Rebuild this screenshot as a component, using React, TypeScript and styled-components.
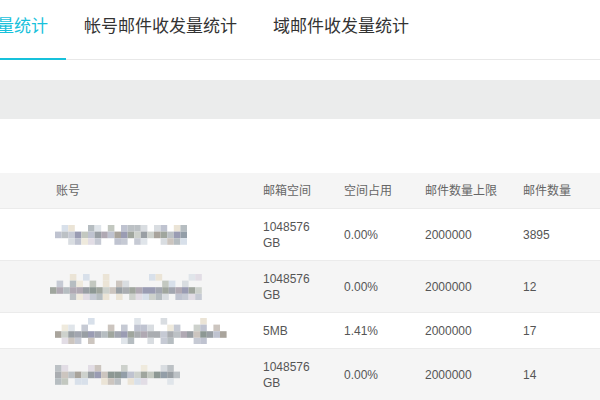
import React from 'react';
import styled, { createGlobalStyle } from 'styled-components';

const GlobalStyle = createGlobalStyle`
  html, body {
    margin: 0;
    padding: 0;
    background: #fff;
  }
  body {
    font-family: 'Liberation Sans', 'Noto Sans CJK SC', Arial, sans-serif;
    overflow: hidden;
  }
`;

const Page = styled.div`
  width: 600px;
  height: 400px;
  overflow: hidden;
`;

const TabBar = styled.div`
  height: 59px;
  border-bottom: 1px solid #e8e8e8;
`;

// the first tab is scrolled partly out of view on the left
const TabList = styled.div`
  display: flex;
  margin-left: -106px;
`;

const Tab = styled.div<{ $active?: boolean }>`
  box-sizing: border-box;
  height: 60px;
  padding: 0 18px;
  line-height: 54px;
  font-size: 17px;
  white-space: nowrap;
  color: ${p => (p.$active ? '#17c1db' : '#333')};
  border-bottom: 2px solid ${p => (p.$active ? '#17c1db' : 'transparent')};
  cursor: pointer;
`;

const FilterBar = styled.div`
  margin-top: 20px;
  height: 39px;
  background: #ebecec;
`;

const Table = styled.div`
  margin-top: 54px;
  font-size: 12px;
  color: #555;
`;

const Row = styled.div<{ $striped?: boolean; $head?: boolean }>`
  display: grid;
  grid-template-columns: 56px 207px 81px 81px 98px 77px;
  align-items: center;
  background: ${p => (p.$striped || p.$head ? '#f5f5f5' : '#fff')};
  border-bottom: 1px solid #ebebeb;
  color: ${p => (p.$head ? '#666' : '#555')};
`;

const Cell = styled.div<{ $narrow?: boolean }>`
  padding: 10px ${p => (p.$narrow ? '24px' : '8px')} 9px 0;
  line-height: 16px;
  min-height: 16px;
`;

const MosaicWrap = styled.div`
  height: 16px;
  display: flex;
  align-items: center;
`;

const palette = {
  dark: ['#999fa4', '#a2a6b0', '#8d9894', '#9a9cb3', '#aaadb1', '#a0a69e', '#b0a9b3', '#939ea8', '#a9a49c'],
  mid: ['#bcc1c5', '#c3c8c0', '#bfc3d0', '#ccc5bf', '#b6bdc1', '#c6cad4', '#cdd1cc'],
  light: ['#d9dde1', '#e0e5ea', '#ebe4d6', '#d8e0ea', '#e2dde5', '#efeadd'],
};

function rng(seed: number) {
  let s = seed;
  return () => {
    s = (s * 9301 + 49297) % 233280;
    return s / 233280;
  };
}

const Mosaic: React.FC<{ cols: number; seed: number; rows?: number; offset?: number }> = ({
  cols,
  seed,
  rows = 3,
  offset = 0,
}) => {
  const r = rng(seed);
  const size = 6.6;
  const mainRow = Math.floor(rows / 2);
  const rects: React.ReactNode[] = [];
  for (let c = 0; c < cols; c++) {
    for (let y = 0; y < rows; y++) {
      const dist = Math.abs(y - mainRow);
      const chance = dist === 0 ? 1 : dist === 1 ? 0.55 : 0.25;
      if (r() > chance) continue;
      let set = palette.light;
      if (dist === 0) set = r() > 0.3 ? palette.dark : palette.mid;
      else if (dist === 1) set = r() > 0.45 ? palette.mid : palette.light;
      const fill = set[Math.floor(r() * set.length)];
      rects.push(
        <rect key={`${c}-${y}`} x={c * size} y={y * size} width={size} height={size} fill={fill} />
      );
    }
  }
  return (
    <MosaicWrap>
      <svg width={cols * size} height={rows * size} style={{ marginLeft: offset, flexShrink: 0 }}>
        {rects}
      </svg>
    </MosaicWrap>
  );
};

interface Account {
  cols: number;
  seed: number;
  rows: number;
  offset: number;
  space: string;
  usage: string;
  limit: string;
  count: string;
}

const accounts: Account[] = [
  { cols: 20, seed: 17, rows: 3, offset: -1, space: '1048576 GB', usage: '0.00%', limit: '2000000', count: '3895' },
  { cols: 23, seed: 42, rows: 4, offset: -6, space: '1048576 GB', usage: '0.00%', limit: '2000000', count: '12' },
  { cols: 26, seed: 91, rows: 4, offset: -1, space: '5MB', usage: '1.41%', limit: '2000000', count: '17' },
  { cols: 19, seed: 7, rows: 3, offset: -1, space: '1048576 GB', usage: '0.00%', limit: '2000000', count: '14' },
];

const App: React.FC = () => {
  return (
    <Page>
      <GlobalStyle />
      <TabBar>
        <TabList>
          <Tab $active>总邮件收发量统计</Tab>
          <Tab>帐号邮件收发量统计</Tab>
          <Tab>域邮件收发量统计</Tab>
        </TabList>
      </TabBar>

      <FilterBar />

      <Table>
        <Row $head>
          <Cell />
          <Cell>账号</Cell>
          <Cell>邮箱空间</Cell>
          <Cell>空间占用</Cell>
          <Cell>邮件数量上限</Cell>
          <Cell>邮件数量</Cell>
        </Row>
        {accounts.map((a, i) => (
          <Row key={i} $striped={i % 2 === 1}>
            <Cell />
            <Cell>
              <Mosaic cols={a.cols} seed={a.seed} rows={a.rows} offset={a.offset} />
            </Cell>
            <Cell $narrow>{a.space}</Cell>
            <Cell>{a.usage}</Cell>
            <Cell>{a.limit}</Cell>
            <Cell>{a.count}</Cell>
          </Row>
        ))}
      </Table>
    </Page>
  );
};

export default App;
